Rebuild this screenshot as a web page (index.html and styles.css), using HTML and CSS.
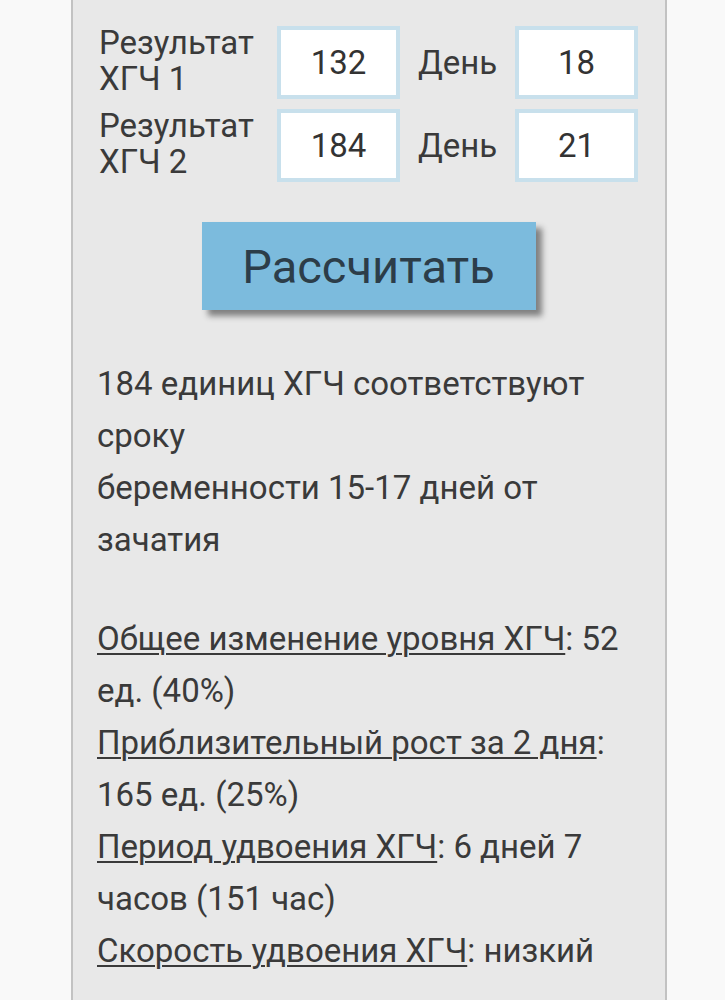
FILE: index.html
```html
<!DOCTYPE html>
<html lang="ru">
<head>
    <meta charset="UTF-8">
    <meta name="viewport" content="width=device-width, initial-scale=1.0">
    <title>Калькулятор ХГЧ</title>
    <link rel="stylesheet" href="styles.css">
</head>
<body>
    <div class="calc">
        <!-- Ввод результатов -->
        <div class="row">
            <label class="lbl">Результат<br>ХГЧ 1</label>
            <input class="field" type="text" value="132">
            <span class="day">День</span>
            <input class="field" type="text" value="18">
        </div>
        <div class="row">
            <label class="lbl">Результат<br>ХГЧ 2</label>
            <input class="field" type="text" value="184">
            <span class="day">День</span>
            <input class="field" type="text" value="21">
        </div>

        <button class="calc-btn">Рассчитать</button>

        <!-- Результат -->
        <div class="result">
            <p class="summary">184 единиц ХГЧ соответствуют сроку<br>беременности 15-17 дней от зачатия</p>
            <p class="stats">
                <u>Общее изменение уровня ХГЧ</u>: 52 ед. (40%)<br>
                <u>Приблизительный рост за 2 дня</u>: 165 ед. (25%)<br>
                <u>Период удвоения ХГЧ</u>: 6 дней 7 часов (151 час)<br>
                <u>Скорость удвоения ХГЧ</u>: низкий
            </p>
        </div>
    </div>
</body>
</html>
```

FILE: styles.css
```css
body {
    margin: 0;
    background: #f9f9f9;
    font-family: Roboto, "Noto Sans", sans-serif;
    color: #3a3a3a;
}
.calc {
    margin-left: 71px;
    width: 596px;
    min-height: 1000px;
    box-sizing: border-box;
    background: #e8e8e8;
    border-left: 2px solid #c2c2c2;
    border-right: 2px solid #c2c2c2;
    padding: 26px 25px 40px 24px;
}
.row {
    display: flex;
    align-items: center;
    margin-bottom: 10px;
}
.lbl {
    width: 178px;
    padding-left: 2px;
    font-size: 33px;
    line-height: 36px;
    margin-top: -4px;
}
.field {
    width: 123px;
    height: 73px;
    box-sizing: border-box;
    border: 4px solid #c8e0ec;
    background: #fff;
    font-family: Roboto, sans-serif;
    font-size: 33px;
    color: #333;
    text-align: center;
    padding: 0;
}
.day {
    width: 79px;
    margin: 0 18px;
    font-size: 33px;
}
.calc-btn {
    display: block;
    margin: 40px auto 0;
    width: 334px;
    height: 88px;
    background: #7cbbdd;
    color: #2c3d49;
    font-family: Roboto, sans-serif;
    font-size: 47px;
    border: none;
    box-shadow: 6px 6px 6px rgba(0, 0, 0, 0.45);
    cursor: pointer;
}
.result {
    margin-top: 48px;
    font-size: 33px;
    line-height: 52px;
}
.result p {
    margin: 0;
}
.stats {
    margin-top: 47px !important;
}
.stats u {
    text-decoration-thickness: 2px;
    text-underline-offset: 3px;
}
```
